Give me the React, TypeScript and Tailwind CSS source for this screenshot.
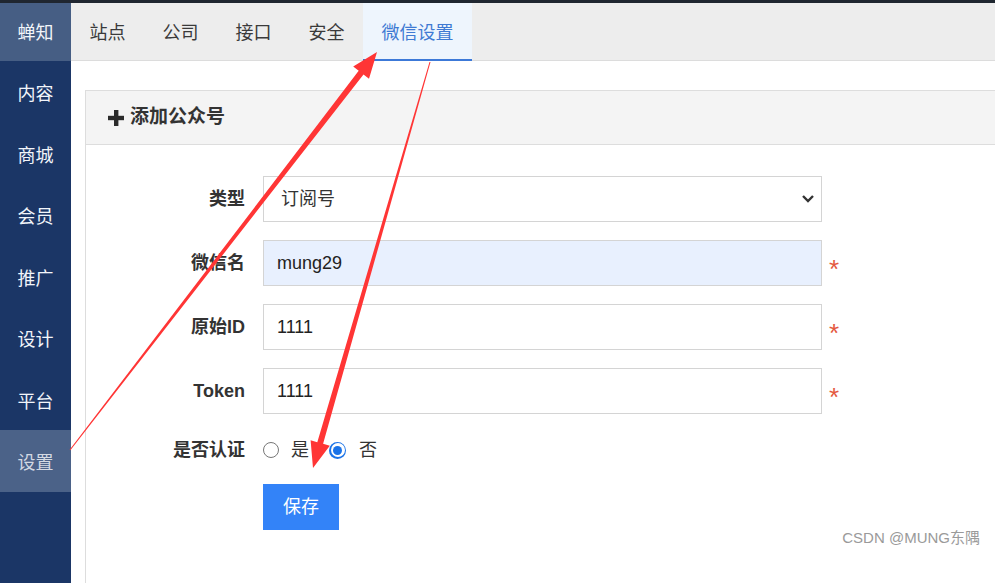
import React from "react";

const font = { fontFamily: '"Liberation Sans","Noto Sans CJK SC",sans-serif' };

const sideItems = ["内容", "商城", "会员", "推广", "设计", "平台", "设置"];
const tabs = ["站点", "公司", "接口", "安全"];

function Asterisk() {
  return <span className="w-[26px] pl-[7px] text-[26px] leading-none text-[#e4593f] pt-[12px]">*</span>;
}

export default function App() {
  return (
    <div className="relative w-[995px] h-[583px] overflow-hidden bg-white flex flex-col" style={font}>
      <div className="h-[3px] bg-[#1f2630] shrink-0" />
      <div className="flex flex-1 min-h-0">
        {/* Sidebar */}
        <div className="w-[71px] shrink-0 bg-[#1b3666] flex flex-col">
          <div className="h-[58px] bg-[#465e84] flex items-center justify-center text-[18px] text-[#f2f5fa] pt-[2px]">蝉知</div>
          {sideItems.map((s) => (
            <div
              key={s}
              className={
                s === "设置"
                  ? "h-[61.5px] bg-[#4b6288] flex items-center justify-center text-[18px] text-[#d3d9e3] pt-[6px]"
                  : "h-[61.5px] flex items-center justify-center text-[18px] text-[#f2f5fa] pt-[6px]"
              }
            >
              {s}
            </div>
          ))}
        </div>
        {/* Main */}
        <div className="flex-1 min-w-0 flex flex-col overflow-hidden">
          <div className="h-[58px] shrink-0 bg-[#ededed] border-b border-[#dcdcdc] flex">
            {tabs.map((t) => (
              <div key={t} className="w-[73px] flex items-center justify-center text-[18px] text-[#3a3a3a] pt-[3px]">
                {t}
              </div>
            ))}
            <div className="w-[109px] flex items-center justify-center text-[18px] text-[#3f7ad3] bg-[#eef5fd] border-b-2 border-[#3c79d8] mb-[-1px] pt-[4px]">
              微信设置
            </div>
          </div>
          <div className="pl-[14px] pt-[29px]">
            <div className="w-[940px] border border-[#dddddd] h-[520px]">
              <div className="h-[54px] bg-[#f4f4f4] border-b border-[#dddddd] flex items-center pl-[22px] text-[19px] font-bold text-[#333]">
                <svg width="16" height="16" viewBox="0 0 16 16" className="mr-[6px]">
                  <rect x="6" y="0" width="4.4" height="16" fill="#2b2b2b" />
                  <rect x="0" y="5.8" width="16" height="4.4" fill="#2b2b2b" />
                </svg>
                添加公众号
              </div>
              <div className="pt-[31px] flex flex-col gap-[18px]">
                <div className="flex items-center">
                  <div className="w-[159px] text-right text-[18px] font-bold text-[#333]">类型</div>
                  <div className="ml-[18px] w-[559px] h-[46px] border border-[#d4d4d4] bg-white flex items-center justify-between pl-[17px] pr-[6px] text-[18px] text-[#333]">
                    <span>订阅号</span>
                    <svg width="14" height="10" viewBox="0 0 14 10">
                      <polyline points="2,2 7,7 12,2" fill="none" stroke="#333" strokeWidth="2.4" />
                    </svg>
                  </div>
                </div>
                <div className="flex items-center">
                  <div className="w-[159px] text-right text-[18px] font-bold text-[#333]">微信名</div>
                  <div className="ml-[18px] w-[559px] h-[46px] border border-[#d4d4d4] bg-[#e8f0fe] flex items-center pl-[13px] text-[18px] text-[#222]">mung29</div>
                  <Asterisk />
                </div>
                <div className="flex items-center">
                  <div className="w-[159px] text-right text-[18px] font-bold text-[#333]">原始ID</div>
                  <div className="ml-[18px] w-[559px] h-[46px] border border-[#d4d4d4] bg-white flex items-center pl-[13px] text-[18px] text-[#222]">1111</div>
                  <Asterisk />
                </div>
                <div className="flex items-center">
                  <div className="w-[159px] text-right text-[18px] font-bold text-[#333]">Token</div>
                  <div className="ml-[18px] w-[559px] h-[46px] border border-[#d4d4d4] bg-white flex items-center pl-[13px] text-[18px] text-[#222]">1111</div>
                  <Asterisk />
                </div>
                <div className="flex items-center h-[30px] mt-[3px]">
                  <div className="w-[159px] text-right text-[18px] font-bold text-[#333]">是否认证</div>
                  <div className="ml-[18px] flex items-center text-[18px] text-[#333]">
                    <span className="w-[16px] h-[16px] rounded-full border border-[#777] bg-white" />
                    <span className="ml-[12px]">是</span>
                    <span className="ml-[20px] w-[17px] h-[17px] rounded-full bg-[#1a73e8] flex items-center justify-center">
                      <span className="w-[14px] h-[14px] rounded-full bg-white flex items-center justify-center">
                        <span className="w-[9px] h-[9px] rounded-full bg-[#1a73e8]" />
                      </span>
                    </span>
                    <span className="ml-[13px]">否</span>
                  </div>
                </div>
                <div className="flex">
                  <div className="ml-[177px] w-[76px] h-[46px] bg-[#3383f8] text-white text-[18px] flex items-center justify-center mt-[1px]">保存</div>
                </div>
              </div>
            </div>
          </div>
        </div>
      </div>
      {/* Watermark */}
      <div className="absolute right-[15px] top-[527px] text-[15px] text-[#9a9a9a]">
        CSDN @MUNG东隅
      </div>
      {/* Red annotation arrows */}
      <svg className="absolute left-0 top-0 pointer-events-none" width="995" height="583" viewBox="0 0 995 583">
        <polygon
          points="70.4,450.3 363.5,74.4 369.0,78.7 377,52 353.2,66.5 358.7,70.8 69.6,449.7"
          fill="#ff3535"
        />
        <polygon
          points="430.5,62.1 323.1,443.8 329.8,445.8 313,468 310.6,440.2 317.3,442.2 429.5,61.9"
          fill="#ff3535"
        />
      </svg>
    </div>
  );
}
